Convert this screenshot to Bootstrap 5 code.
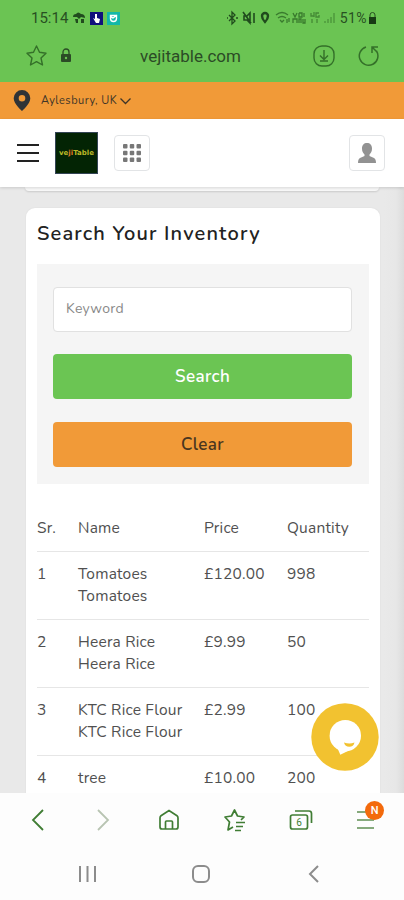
<!DOCTYPE html>
<html lang="en">
<head>
<meta charset="utf-8">
<meta name="viewport" content="width=device-width, initial-scale=1">
<title>Vejitable inventory</title>
<link href="https://cdn.jsdelivr.net/npm/bootstrap@5.3.0/dist/css/bootstrap.min.css" rel="stylesheet">
<style>
body{font-family:Nunito,"Noto Sans","Open Sans",sans-serif;background:#e9e9e9;color:#444;height:900px;overflow:hidden;font-size:15px}
svg{display:block;flex:none}
.browser-top{background:#6bc453;height:82px;color:#285022;font-family:Roboto,sans-serif}
.status{height:36px;padding:0 27px 0 31px;font-size:15px}
.signals{margin-right:2px}
.pct{font-size:14px;letter-spacing:.4px;margin-right:1px}
.address{height:46px;padding:0 24px 0 25px;font-size:17px;color:#2b4b26}
.address>svg{margin-bottom:3px}
.lock{margin-left:10px}
.url{padding-right:6px}
.get{margin-right:23px}
.place{background:#f19a38;height:37px;padding-left:13px;font-size:11px;color:#3f3528}
.place span{margin:1px 2px 0 10px;letter-spacing:.48px}
.sitebar{background:#fff;height:68px;padding:0 19px 0 17px;box-shadow:0 1px 3px #0002}
.square-btn{width:36px;height:36px;border:1px solid #e2e4e6;border-radius:4px;background:#fff;padding:0}
.logo{width:43px;height:42px;background:#032404;border:1px solid #345;color:#b9b827;font:bold 7px "DejaVu Sans",sans-serif}
.logo i{color:#e77b27;font-style:normal}
.page{height:606px;background:linear-gradient(90deg,#e9e9e9 95%,#e7e7e7 98%,#dcdcdc)}
.prev-card{height:4px;margin:0 25px;background:#f8f8f8;border-radius:0 0 9px 9px;box-shadow:0 1px 2px #0002}
.inventory{margin:17px 24px 0 26px;border-radius:9px;height:640px;background:#fff;padding:12px 11px;box-shadow:0 0 2px #0001}
.inventory h1{font-size:20px;line-height:28px;font-weight:600;letter-spacing:1.15px;color:#222;margin:0 0 16px;white-space:nowrap}
.filter{background:#f5f5f5;height:220px;padding:23px 17px 0 16px}
.filter .form-control,.filter .btn{height:45px;border-radius:4px}
.filter .form-control{font-size:14px;padding:0 12px 2px;border-color:#e1e1e1;letter-spacing:.3px}
.filter .form-control::placeholder{color:#888}
.filter .btn{font-size:17px;font-weight:600;border:0;padding:0;letter-spacing:.4px}
.actions{gap:23px;margin-top:22px}
.go{background:#6bc553!important;color:#fff!important}
.wipe{background:#f19a38!important;color:#49351f!important}
.stock{table-layout:fixed;margin:21px 0 0;width:332px;--bs-table-bg:transparent;line-height:22px;font-size:15.5px;letter-spacing:.2px}
.stock th,.stock td{padding:11px 0 0;font-weight:400;height:68px;border-color:#e6e6e6;color:#505050;vertical-align:top}
.stock th{height:46px;padding-top:12px}
.c-sr{width:41px}.c-name{width:126px}.c-price{width:83px}
.chat{left:311px;top:703px;z-index:5}
.browser-nav{background:#fdfdfd;height:107px}
.tools{height:54px;padding:0 5px}
.tools>*{flex:1 1 0;display:flex;justify-content:center}
.system{height:53px;padding:0 80px 0 78px}
.notice{width:19px;height:19px;background:#f36a0c;color:#fff;font:500 11px Roboto,sans-serif;left:9px;top:-8px}
</style>
<script src="https://cdn.jsdelivr.net/npm/bootstrap@5.3.0/dist/js/bootstrap.bundle.min.js"></script>
</head>
<body>
<header>
<div class="browser-top">
 <div class="status d-flex align-items-center">
  <span>15:14</span>
  <svg class="ms-1" width="14" height="14" viewBox="0 0 14 14" fill="#214b1e"><path d="M1 6Q1 3 4 3Q6 0 9 3Q13 3 13 7L9 6L7 8L5 6ZM3 8h3v4H4zM9 8h3v4H9z"/></svg>
  <svg class="ms-1" width="13" height="13" viewBox="0 0 13 13"><path fill="#10107c" d="M0 0h13v13H0z"/><path d="M5 2v5L3 6l3 5h3l1-4-3-1V2z" fill="#fff"/></svg>
  <svg class="ms-1" width="13" height="13" viewBox="0 0 13 13"><path fill="#12b8a8" d="M0 0h13v13H0z"/><path d="M3.500 3.500h6v3a3 3 0 0 1-6 0zM4 5l2 1 4-3" fill="none" stroke="#fff" stroke-width="1.400"/></svg>
  <svg class="signals ms-auto" width="112" height="16" viewBox="0 0 112 16" fill="none" stroke="#204b1d" stroke-width="1.300"><path d="m3 5 6 6-3 3V2l3 3-6 6M1 8h1M10 8h2"/><path d="M18 6h3l3-3v10l-3-3h-3zM17 2l8 11M28 3v10" stroke-width="1.600"/><path d="M36 6a3 3 0 0 1 6 0q0 3-3 6-3-3-3-6z" stroke-width="2.400"/><g stroke="#397a2d"><path d="M50 5q6-5 12 0M52 8q4-3 8 0M54 10l2 2 2-2M61 9v4M63 12V8"/><path d="M67 3l2 4 2-4M73 3v4h3V3h-3M78 3v4M67 13V9h4v4M73 13V9h2v4M77 9v4h2V9"/><path d="M85 3v3h3M88 2v5M93 3h-3v4h3V5M86 9v4M91 13V9" opacity=".8"/><path d="M99 13v-2M102 13v-4M105 13V7M108 13V3" opacity=".65"/></g></svg>
  <span class="pct">51%</span>
  <svg width="9" height="13" viewBox="0 0 9 13"><path d="M2 6V3a2.500 2.500 0 0 1 5 0v3" fill="none" stroke="#285022"/><path fill="#173a14" d="M1 5h7v7H1z"/></svg>
 </div>
 <div class="address d-flex align-items-center pb-1">
  <svg width="23" height="23" viewBox="0 0 23 23" fill="none" stroke="#347029" stroke-width="1.400" stroke-linejoin="round"><path d="m11.500 2 3 6.200 6.500 1-5 4.800 1.500 7-6-3.300-6 3.300L7 14 2 9.200l6.500-1z"/></svg>
  <svg class="lock" width="16" height="17" viewBox="0 0 16 17"><path d="M5 8V5a3 3 0 0 1 6 0v3" fill="none" stroke="#2b4b26" stroke-width="1.300"/><rect x="3" y="7" width="10" height="8" rx="1" fill="#2b4b26"/><circle cx="8" cy="11" r="1.200" fill="#6bc453"/></svg>
  <span class="flex-grow-1 text-center url">vejitable.com</span>
  <svg class="get" width="22" height="22" viewBox="0 0 22 22" fill="none" stroke="#347029" stroke-width="1.400"><rect x="1" y="1" width="20" height="20" rx="8"/><path d="M11 5v9M7 10.500l4 4 4-4M7 16h8"/></svg>
  <svg width="22" height="22" viewBox="0 0 22 22" fill="none" stroke="#347029" stroke-width="1.500"><path d="M8 2a9.300 9.300 0 1 0 10.500 4M20 2h-6v6M14 2l5 5"/></svg>
 </div>
</div>
<div class="place d-flex align-items-center">
 <svg width="18" height="21" viewBox="0 0 18 21"><path fill="#303336" fill-rule="evenodd" d="M9 0a8.300 8.300 0 0 1 8.300 8.300C17.300 14 9 21 9 21S.7 14 .7 8.300A8.300 8.300 0 0 1 9 0m0 5a3.300 3.300 0 1 0 0 6.600a3.300 3.300 0 0 0 0-6.600"/></svg>
 <span>Aylesbury, UK</span>
 <svg width="13" height="8" viewBox="0 0 13 8" fill="none" stroke="#3f3528" stroke-width="1.300"><path d="m1.500 1.500 5 5 5-5"/></svg>
</div>
<nav class="sitebar d-flex align-items-center position-relative">
 <svg width="22" height="20" viewBox="0 0 22 20" stroke="#222" stroke-width="2.200"><path d="M0 2h22M0 10h22M0 18h22"/></svg>
 <div class="logo ms-3 d-flex align-items-center justify-content-center"><span>ve<i>ji</i>Table</span></div>
 <button class="square-btn ms-3 d-flex align-items-center justify-content-center" aria-label="Menu"><svg width="20" height="20" viewBox="0 0 20 20" fill="#777"><rect x="1" y="1" width="4.500" height="4.500" rx="1"/><rect x="7.750" y="1" width="4.500" height="4.500" rx="1"/><rect x="14.500" y="1" width="4.500" height="4.500" rx="1"/><rect x="1" y="7.750" width="4.500" height="4.500" rx="1"/><rect x="7.750" y="7.750" width="4.500" height="4.500" rx="1"/><rect x="14.500" y="7.750" width="4.500" height="4.500" rx="1"/><rect x="1" y="14.500" width="4.500" height="4.500" rx="1"/><rect x="7.750" y="14.500" width="4.500" height="4.500" rx="1"/><rect x="14.500" y="14.500" width="4.500" height="4.500" rx="1"/></svg></button>
 <button class="square-btn ms-auto d-flex align-items-center justify-content-center" aria-label="Account"><svg width="18" height="22" viewBox="0 0 18 22" fill="#929292"><path d="M9 1c3 0 5 2 5 5.500 0 3-1 4.500-2.500 6V14L16 16q2 1 2 5H0q0-4 2-5l4.500-2v-1.500C5 11 4 9.500 4 6.500 4 3 6 1 9 1"/></svg></button>
</nav>
</header>
<main class="page overflow-hidden">
 <div class="prev-card"></div>
 <section class="inventory">
  <h1>Search Your Inventory</h1>
  <form class="filter">
   <input class="form-control" placeholder="Keyword" aria-label="Keyword">
   <div class="d-grid actions">
   <button type="button" class="btn go w-100">Search</button>
   <button type="button" class="btn wipe w-100">Clear</button>
   </div>
  </form>
  <table class="table stock">
   <colgroup><col class="c-sr"><col class="c-name"><col class="c-price"><col></colgroup>
   <thead><tr><th>Sr.</th><th>Name</th><th>Price</th><th>Quantity</th></tr></thead>
   <tbody>
    <tr><td>1</td><td>Tomatoes<br>Tomatoes</td><td>£120.00</td><td>998</td></tr>
    <tr><td>2</td><td>Heera Rice<br>Heera Rice</td><td>£9.99</td><td>50</td></tr>
    <tr><td>3</td><td>KTC Rice Flour<br>KTC Rice Flour</td><td>£2.99</td><td>100</td></tr>
    <tr><td>4</td><td>tree</td><td>£10.00</td><td>200</td></tr>
   </tbody>
  </table>
 </section>
</main>
<div class="chat position-absolute"><svg width="68" height="68" viewBox="0 0 68 68"><circle cx="34" cy="34" r="33.700" fill="#f2c230"/><circle cx="34.300" cy="32.700" r="15.700" fill="#fff"/><path d="m26 44 3.300 7.800L43 45z" fill="#fff"/><path d="M33 39.500q5.500 2 10.500 0-1 4.300-5.200 4.300T33 39.500" fill="#f2c230"/></svg></div>
<footer class="browser-nav">
 <div class="tools d-flex align-items-center">
  <div><svg width="15" height="22" viewBox="0 0 15 22" fill="none" stroke="#407d34" stroke-width="1.800"><path d="M13 1 3 11l10 10"/></svg></div>
  <div><svg width="15" height="22" viewBox="0 0 15 22" fill="none" stroke="#b8c4b2" stroke-width="1.800"><path d="m2 1 10 10L2 21"/></svg></div>
  <div><svg width="22" height="22" viewBox="0 0 22 22" fill="none" stroke="#407d34" stroke-width="1.700"><path d="M2 9q0-1.500 1-2.200L11 1.500l8 5.300Q20 7.500 20 9v9q0 2-2 2H4q-2 0-2-2zM7.500 20v-7q0-1 1-1h5q1 0 1 1v7"/></svg></div>
  <div><svg width="23" height="23" viewBox="0 0 23 23" fill="none" stroke="#407d34" stroke-width="1.700" stroke-linejoin="round"><path d="m18 11 3-3-6.500-1L11.500 1l-3 6L2 8l4.500 5L5 21l5-3M13 13.500h9M13 17.500h7M12 21.500h6"/></svg></div>
  <div><svg width="24" height="22" viewBox="0 0 24 22" fill="none" stroke="#407d34" stroke-width="1.700"><rect x="1.500" y="6" width="17" height="14" rx="2"/><path d="M6 2h14q2.500 0 2.500 2.500V14"/><text x="7.300" y="17" font-family="Roboto" font-size="10" fill="#407d34" stroke="none">6</text></svg></div>
  <div><span class="position-relative"><svg width="20" height="22" viewBox="0 0 20 22" stroke="#86aa7d" stroke-width="2.200"><path d="M1 3h17M1 11h17M1 19h17"/></svg><span class="notice rounded-circle position-absolute d-flex align-items-center justify-content-center">N</span></span></div>
 </div>
 <div class="system d-flex align-items-center justify-content-between">
  <svg width="20" height="18" viewBox="0 0 20 18" stroke="#8c8c8c" stroke-width="2"><path d="M2 1v16M9.500 1v16M17 1v16"/></svg>
  <svg width="20" height="20" viewBox="0 0 20 20" fill="none" stroke="#8c8c8c" stroke-width="2"><rect x="2" y="2" width="16" height="16" rx="5"/></svg>
  <svg width="20" height="18" viewBox="0 0 20 18" fill="none" stroke="#8c8c8c" stroke-width="2"><path d="m14 1-8 8 8 8"/></svg>
 </div>
</footer>
</body>
</html>
